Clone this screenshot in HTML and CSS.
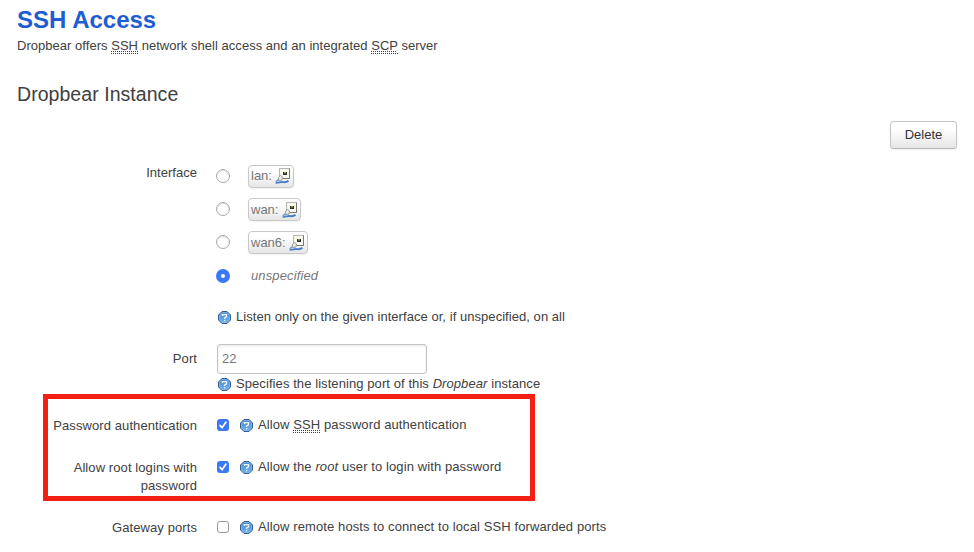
FILE: index.html
```
<!DOCTYPE html>
<html lang="en">
<head>
<meta charset="utf-8">
<title>SSH Access</title>
<link rel="stylesheet" href="styles.css">
</head>
<body>
<svg class="defs" width="0" height="0" aria-hidden="true">
  <defs>
    <linearGradient id="blue" x1="0" y1="0" x2="0" y2="1"><stop offset="0" stop-color="#4485d3"/><stop offset="1" stop-color="#72b5f3"/></linearGradient>
    <symbol id="help" viewBox="0 0 13 13">
      <path d="M4 .5h5L12.5 4v5L9 12.5H4L.5 9V4z" fill="url(#blue)" stroke="#365c88" stroke-width="1"/>
      <path d="M4.3 1.5h4.4l2.8 2.8v4.4l-2.8 2.8H4.3L1.5 8.7V4.3z" fill="none" stroke="#82b8ed" stroke-width=".8"/>
      <path d="M4.4 5V3.6h4.1v2.2L6.6 7v1M6.6 9v1.3" fill="none" stroke="#f4faff" stroke-width="1.3"/>
    </symbol>
    <symbol id="net" viewBox="0 0 16 16">
      <path d="M4.5.5h10v10h-10z" fill="#f8f7f0" stroke="#b5b4ad"/>
      <path d="M14.5.5v10H8" fill="none" stroke="#77776f"/>
      <path d="M8 4h4v3H8z" fill="#27303c"/><path d="M9 4h2v1.4H9z" fill="#a19324"/>
      <path d="M.8 14.8c2.6.4 4.5-1 6.5-.8s4 .8 6.2-1.2" fill="none" stroke="#4a7fc8" stroke-width="1.9"/>
      <path d="M.8 14.5c.7-1.8 1.7-2.4 3-3" fill="none" stroke="#6d9bd4" stroke-width="1.5"/>
      <path d="M3.4 9.4L5.5 7.5 7.6 9l-.8 3.2-3 .3z" fill="#e8e8e8" stroke="#8b8b8b" stroke-width=".8"/>
    </symbol>
  </defs>
</svg>
<main>
  <h2>SSH Access</h2>
  <p class="intro">Dropbear offers <abbr>SSH</abbr> network shell access and an integrated <abbr>SCP</abbr> server</p>
  <h3>Dropbear Instance</h3>
  <div class="actions"><button class="btn">Delete</button></div>
  <section class="form">
    <div class="row interface">
      <div class="label">Interface</div>
      <div class="field">
        <label class="option"><span class="radio"></span><span class="badge">lan: <svg class="net"><use href="#net"/></svg></span></label>
        <label class="option"><span class="radio"></span><span class="badge wan">wan: <svg class="net"><use href="#net"/></svg></span></label>
        <label class="option"><span class="radio"></span><span class="badge">wan6: <svg class="net"><use href="#net"/></svg></span></label>
        <label class="option"><span class="radio on"></span><em class="none">unspecified</em></label>
        <div class="hint"><svg class="help"><use href="#help"/></svg><span>Listen only on the given interface or, if unspecified, on all</span></div>
      </div>
    </div>
    <div class="row port">
      <div class="label">Port</div>
      <div class="field">
        <input class="text" type="text" value="22">
        <div class="hint"><svg class="help"><use href="#help"/></svg><span>Specifies the listening port of this <em>Dropbear</em> instance</span></div>
      </div>
    </div>
    <div class="row">
      <div class="label">Password authentication</div>
      <div class="field check"><span class="box on"><svg viewBox="0 0 12 12"><path d="M3 6.4l2.1 2.4L9 3.1"/></svg></span><svg class="help"><use href="#help"/></svg><span>Allow <abbr>SSH</abbr> password authentication</span></div>
    </div>
    <div class="row">
      <div class="label">Allow root logins with password</div>
      <div class="field check"><span class="box on"><svg viewBox="0 0 12 12"><path d="M3 6.4l2.1 2.4L9 3.1"/></svg></span><svg class="help"><use href="#help"/></svg><span>Allow the <em>root</em> user to login with password</span></div>
    </div>
    <div class="row">
      <div class="label">Gateway ports</div>
      <div class="field check"><span class="box"></span><svg class="help"><use href="#help"/></svg><span>Allow remote hosts to connect to local SSH forwarded ports</span></div>
    </div>
  </section>
</main>
<div class="highlight"></div>
</body>
</html>
```
FILE: styles.css
```
* { box-sizing: border-box; }
body {
  margin: 0;
  height: 552px;
  overflow: hidden;
  background: #fff;
  color: #404040;
  font: 13px/18px "Liberation Sans", Arial, sans-serif;
}
.defs { display: block; height: 0; }
main { padding: 1px 17px 0; }
h2 { margin: 0; font-size: 24px; line-height: 37px; height: 36px; color: #1f5dd3; }
.intro { margin: 0; letter-spacing: .03px; }
abbr { border-bottom: 1px dotted #404040; text-decoration: underline dotted #404040 1px; text-underline-offset: 1px; }
h3 { margin: 21px 0 0; font-size: 19.5px; line-height: 36px; font-weight: normal; letter-spacing: .05px; }
.actions { display: flex; justify-content: flex-end; margin-top: 9px; }
.btn {
  width: 67px;
  height: 28px;
  padding: 0;
  border: 1px solid #c5c5c5;
  border-bottom-color: #b5b5b5;
  border-radius: 4px;
  background: linear-gradient(#fff, #fff 25%, #e6e6e6);
  box-shadow: 0 1px 2px rgba(0, 0, 0, .08);
  font: inherit;
  color: #333;
}
.form { margin-top: 10px; }
.row { display: grid; grid-template-columns: 180px 1fr; column-gap: 20px; margin-bottom: 24px; }
.label { padding-left: 30px; padding-top: 1px; text-align: right; letter-spacing: .09px; margin-bottom: -1px; }
.interface { margin-bottom: 18px; }
.interface .label { padding-top: 5px; letter-spacing: .02px; }
.port .label { padding-top: 6px; }
.port { margin-bottom: 23px; }
.option { display: flex; align-items: center; height: 33.4px; color: #777; }
.radio { width: 14px; height: 14px; margin: 0 17px 0 -1px; border: 1px solid #aaa; border-radius: 50%; background: #fff; box-shadow: inset 0 1px 1px #ddd; }
.radio.on { border: 5px solid #3b78f6; box-shadow: none; }
.badge {
  display: flex;
  align-items: center;
  gap: 3px;
  height: 23px;
  margin-left: 1px;
  padding: 0 2px;
  border: 1px solid #c8c8c8;
  border-radius: 4px;
  background: linear-gradient(#fff, #fff 25%, #e6e6e6);
  box-shadow: 0 1px 2px rgba(0, 0, 0, .06);
  position: relative;
  top: .5px;
}
.badge.wan { gap: 4px; }
.net { width: 16px; height: 16px; }
.none { margin-left: 4px; letter-spacing: .12px; }
.hint { display: flex; align-items: center; gap: 5px; letter-spacing: .05px; }
.interface .hint { margin-top: 15px; }
.port .hint { margin-top: 1px; letter-spacing: .08px; }
.help { flex: none; width: 13px; height: 13px; margin-left: 1px; position: relative; top: 1px; }
.text {
  display: block;
  width: 210px;
  height: 30px;
  padding: 0 4px;
  border: 1px solid #c3c3c3;
  border-radius: 3px;
  box-shadow: inset 0 1px 3px rgba(0, 0, 0, .1);
  font: inherit;
  color: #777;
}
.check { display: flex; align-items: center; height: 18px; letter-spacing: .1px; }
.check .help { margin: 0 5px 0 11px; }
.box { width: 12px; height: 12px; border: 1px solid #999; border-radius: 3px; }
.box.on { border: 0; background: #3b78f6; }
.box svg { display: block; width: 12px; height: 12px; fill: none; stroke: #fff; stroke-width: 1.7; stroke-linecap: round; stroke-linejoin: round; }
.highlight { position: absolute; left: 43px; top: 394px; width: 492px; height: 107px; border: 5px solid #f32013; }
```
